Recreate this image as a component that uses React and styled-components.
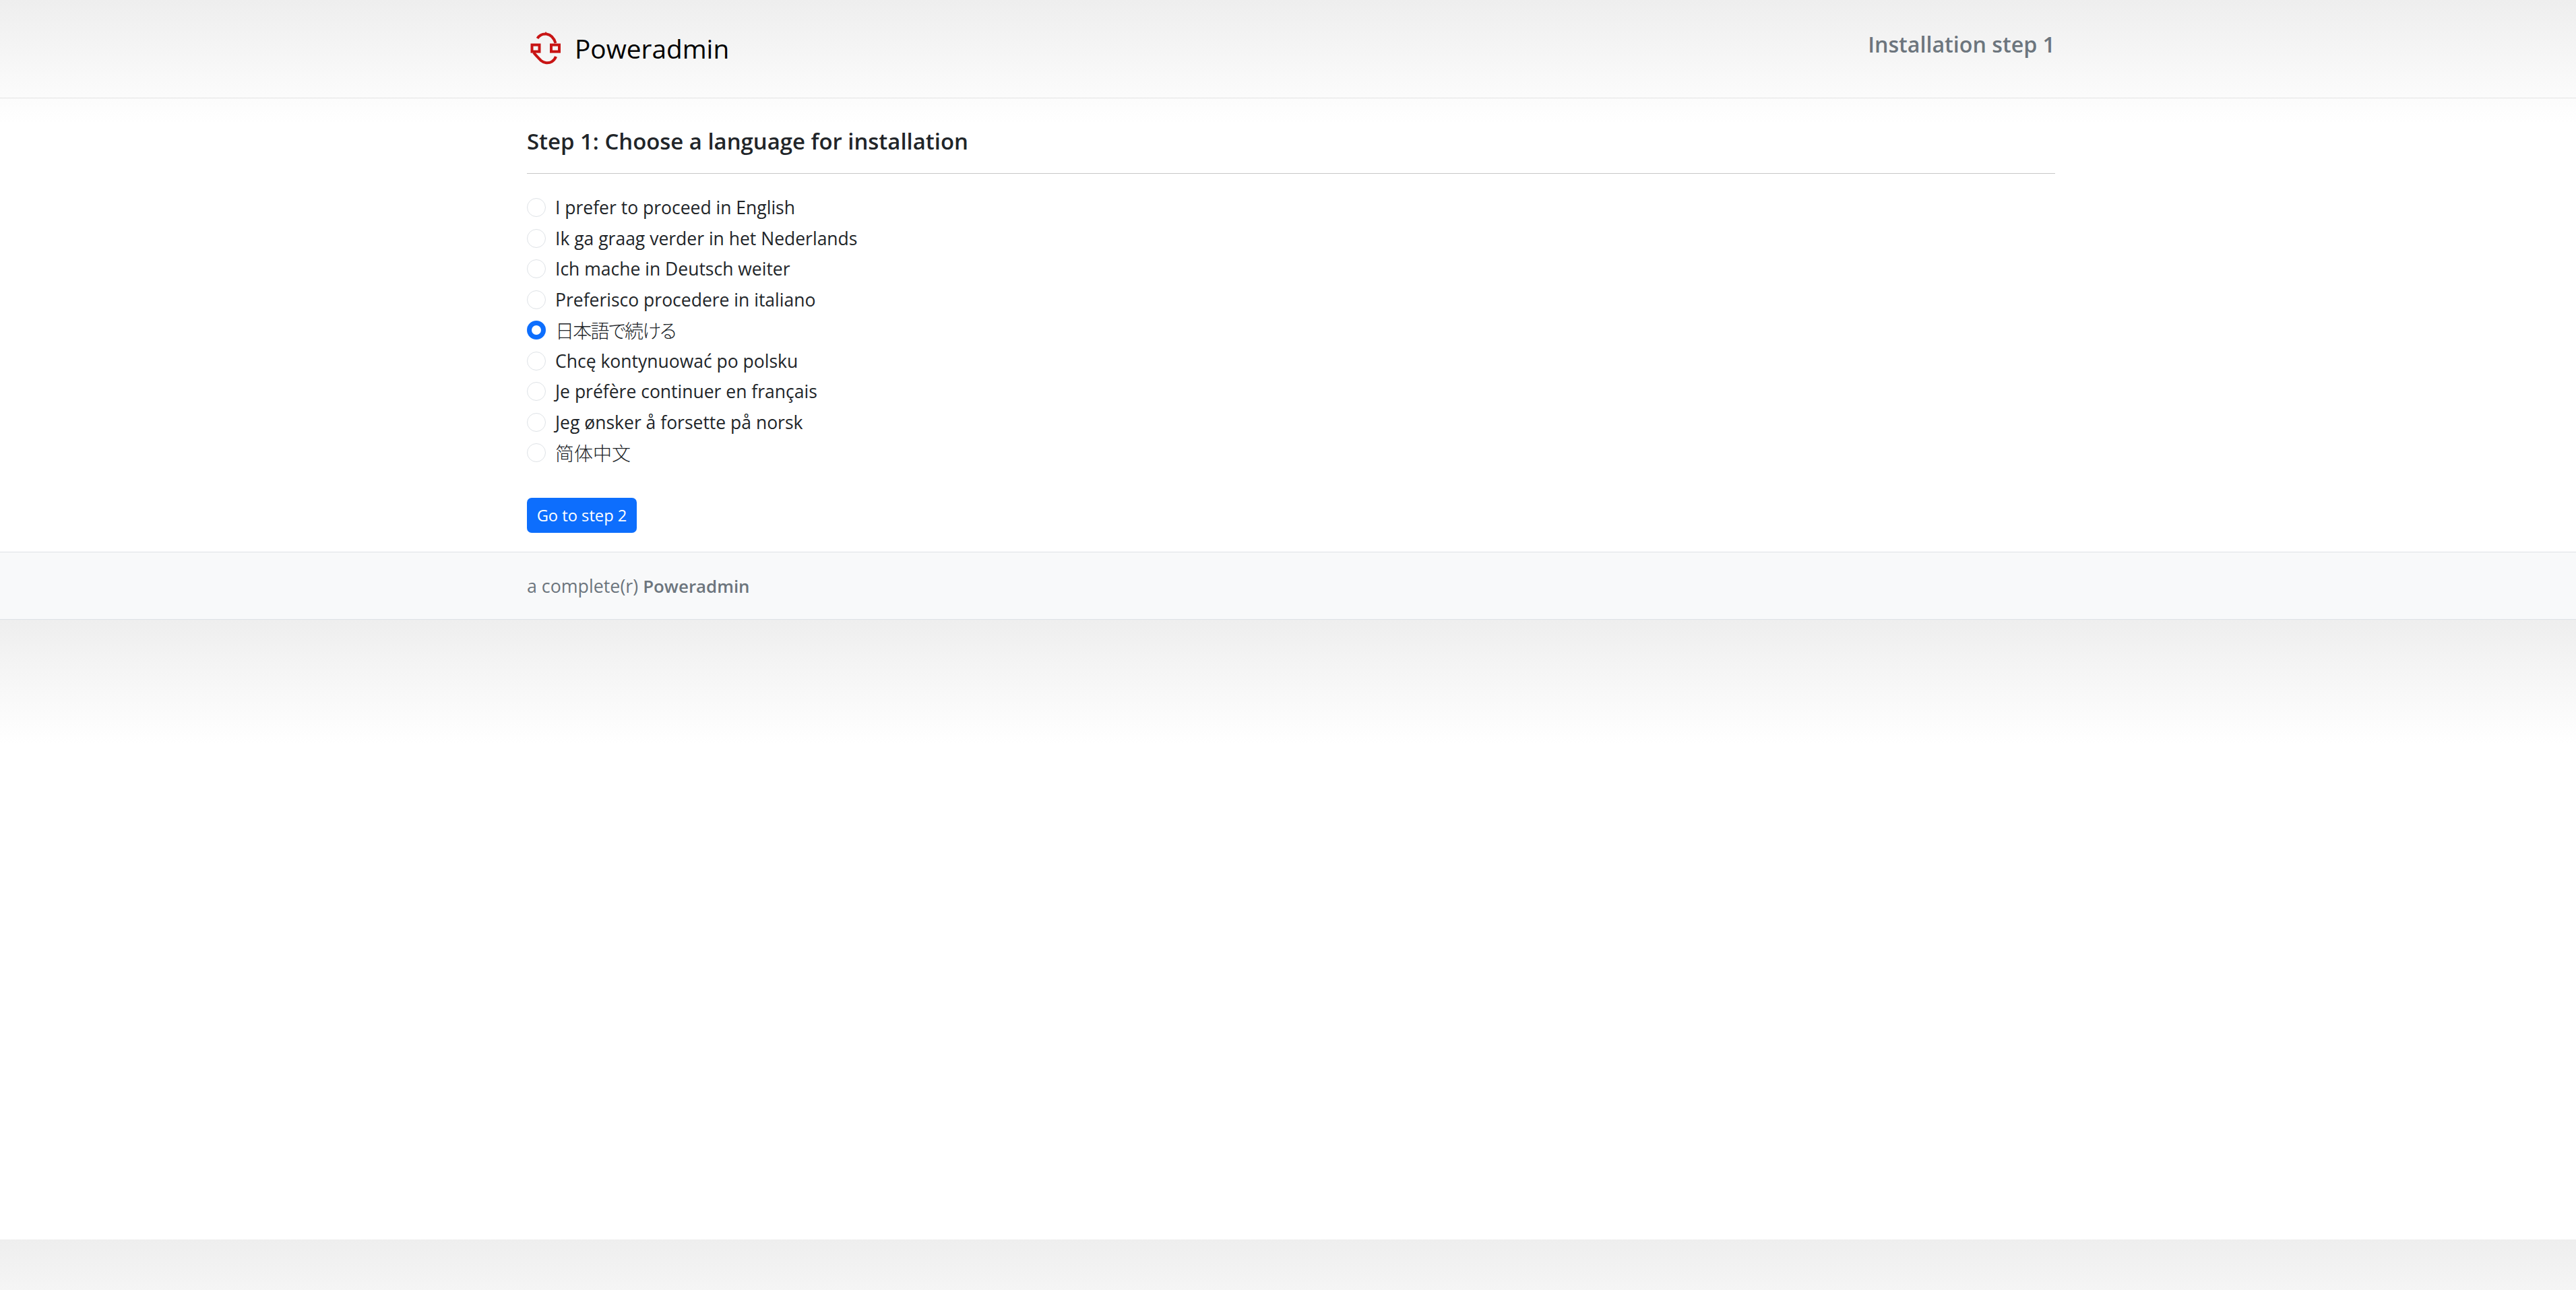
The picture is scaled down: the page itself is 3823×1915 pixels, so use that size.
import React from 'react';
import styled, { createGlobalStyle } from 'styled-components';

const Global = createGlobalStyle`
  html {
    background: linear-gradient(#eeeeee, #ffffff 20%);
  }
  body {
    margin: 0;
    font-family: "Open Sans", "Noto Sans", sans-serif;
    color: #212529;
  }
`;

const Container = styled.div`
  width: 2268px;
  margin-left: calc(50% - 1129.5px);
`;

const Header = styled.header`
  border-bottom: 1px solid #e3e3e3;
  padding: 47px 0 48px;
`;

const HeaderRow = styled(Container)`
  display: flex;
  justify-content: space-between;
  align-items: center;
  height: 50px;
`;

const Brand = styled.a`
  display: flex;
  align-items: center;
  gap: 20px;
  margin-left: 3px;
  font-size: 38.8px;
  line-height: 50px;
  color: #000000;
  text-decoration: none;
`;

const Logo = styled.svg`
  width: 48px;
  height: 50px;
  flex: none;
`;

const StepLabel = styled.span`
  font-size: 32.2px;
  font-weight: 600;
  line-height: 42px;
  color: #6c757d;
  margin-bottom: 13px;
`;

const Main = styled(Container).attrs({ as: 'main' })`
  padding: 43px 0 28px;
`;

const Title = styled.h5`
  margin: 0 0 29px;
  padding-bottom: 26px;
  border-bottom: 1px solid #c8c8c8;
  font-size: 32.9px;
  font-weight: 600;
  line-height: 42px;
  color: #212529;
`;

const Choices = styled.div`
  padding-bottom: 42.5px;
`;

const Choice = styled.label`
  display: flex;
  align-items: center;
  gap: 14px;
  height: 42px;
  margin-bottom: 3.5px;
  font-size: 26.5px;
  line-height: 42px;
  color: #212529;
`;

const ChoiceText = styled.span`
  font-family: ${(p) => (p.$cjk ? `"Noto Sans CJK ${p.$cjk}", sans-serif` : 'inherit')};
  font-size: ${(p) => (p.$cjk ? '28px' : 'inherit')};
  font-feature-settings: ${(p) => (p.$cjk ? '"palt"' : 'normal')};
  font-weight: ${(p) => (p.$cjk ? 300 : 400)};
  letter-spacing: ${(p) => (p.$cjk === 'JP' ? '-1.7px' : 'normal')};
`;

const Radio = styled.input.attrs({ type: 'radio', name: 'language' })`
  appearance: none;
  box-sizing: border-box;
  flex: none;
  width: 28px;
  height: 28px;
  margin: 0;
  border-radius: 50%;
  border: 1px solid #dee2e6;
  background: #ffffff;

  &:checked {
    border: 7px solid #0d6efd;
  }
`;

const Button = styled.button`
  display: block;
  box-sizing: border-box;
  width: 163px;
  height: 52px;
  padding: 0;
  border: none;
  border-radius: 7px;
  background: #0d6efd;
  color: #ffffff;
  font-family: inherit;
  font-size: 23.7px;
  line-height: 52px;
`;

const Footer = styled.footer`
  background: #f8f9fa;
  border-top: 1px solid #dee2e6;
  border-bottom: 1px solid #dee2e6;
  padding: 29px 0 28px;
`;

const FooterText = styled.p`
  margin: 0;
  font-size: 26.8px;
  line-height: 42px;
  color: #6c757d;
`;

const FooterStrong = styled.strong`
  font-size: 25.9px;
  font-weight: 600;
`;

const languages = [
  { text: 'I prefer to proceed in English' },
  { text: 'Ik ga graag verder in het Nederlands' },
  { text: 'Ich mache in Deutsch weiter' },
  { text: 'Preferisco procedere in italiano' },
  { text: '日本語で続ける', cjk: 'JP', checked: true },
  { text: 'Chcę kontynuować po polsku' },
  { text: 'Je préfère continuer en français' },
  { text: 'Jeg ønsker å forsette på norsk' },
  { text: '简体中文', cjk: 'SC' },
];

export default function App() {
  return (
    <>
      <Global />
      <Header>
        <HeaderRow>
          <Brand href="#">
            <Logo viewBox="5 5 48 50" fill="none" stroke="#c81414" strokeWidth="4">
              <rect x="9.5" y="24.6" width="11" height="10" />
              <rect x="38" y="24.6" width="12" height="10" />
              <path d="M17.5 15 C20.5 10 26 8 31 8.5 C37 9.5 42 14 44.5 22" />
              <path d="M30 5.5 V8" strokeWidth="1.6" />
              <path d="M12 36 C15 40 19 44 23 48 C27 51.5 34 52.5 39 49.5 C42 47.5 44 45 45 42" />
            </Logo>
            Poweradmin
          </Brand>
          <StepLabel>Installation step 1</StepLabel>
        </HeaderRow>
      </Header>
      <Main>
        <Title>Step 1: Choose a language for installation</Title>
        <Choices>
          {languages.map((l) => (
            <Choice key={l.text}>
              <Radio defaultChecked={l.checked} />
              <ChoiceText $cjk={l.cjk}>{l.text}</ChoiceText>
            </Choice>
          ))}
        </Choices>
        <Button>Go to step 2</Button>
      </Main>
      <Footer>
        <Container>
          <FooterText>
            a complete(r) <FooterStrong>Poweradmin</FooterStrong>
          </FooterText>
        </Container>
      </Footer>
    </>
  );
}
